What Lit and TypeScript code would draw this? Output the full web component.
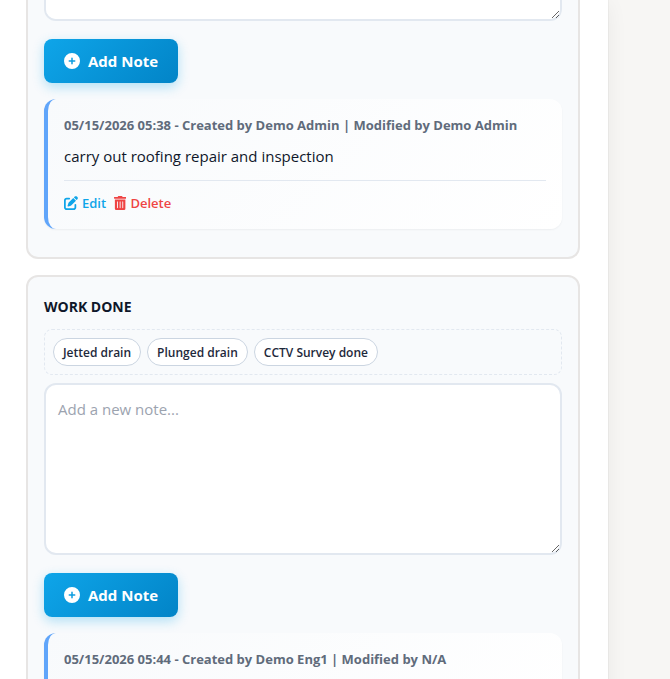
import { LitElement, html, svg, css, nothing } from "lit";
import { customElement, property } from "lit/decorators.js";

const icon = (viewBox: string, path: string) => html`
  <svg class="icon" viewBox=${viewBox} aria-hidden="true">${svg`<path d=${path} />`}</svg>
`;

const plusIcon = icon(
  "0 0 512 512",
  "M256 512A256 256 0 1 0 256 0a256 256 0 1 0 0 512zM232 344V280H168c-13.3 0-24-10.7-24-24s10.7-24 24-24h64V168c0-13.3 10.7-24 24-24s24 10.7 24 24v64h64c13.3 0 24 10.7 24 24s-10.7 24-24 24H280v64c0 13.3-10.7 24-24 24s-24-10.7-24-24z"
);
const editIcon = icon(
  "0 0 512 512",
  "M471.6 21.7c-21.9-21.9-57.3-21.9-79.2 0L362.3 51.7l97.9 97.9 30.1-30.1c21.9-21.9 21.9-57.3 0-79.2L471.6 21.7zm-299.2 220c-6.1 6.1-10.8 13.6-13.5 21.9l-29.6 88.8c-2.9 8.6-.6 18.1 5.8 24.6s15.9 8.7 24.6 5.8l88.8-29.6c8.2-2.7 15.7-7.4 21.9-13.5L437.7 172.3 339.7 74.3 172.4 241.7zM96 64C43 64 0 107 0 160V416c0 53 43 96 96 96H352c53 0 96-43 96-96V320c0-17.7-14.3-32-32-32s-32 14.3-32 32v96c0 17.7-14.3 32-32 32H96c-17.7 0-32-14.3-32-32V160c0-17.7 14.3-32 32-32h96c17.7 0 32-14.3 32-32s-14.3-32-32-32H96z"
);
const trashIcon = icon(
  "0 0 448 512",
  "M32 464a48 48 0 0 0 48 48h288a48 48 0 0 0 48-48V128H32zm272-256a16 16 0 0 1 32 0v224a16 16 0 0 1-32 0zm-96 0a16 16 0 0 1 32 0v224a16 16 0 0 1-32 0zm-96 0a16 16 0 0 1 32 0v224a16 16 0 0 1-32 0zM432 32H312l-9.4-18.7A24 24 0 0 0 281.1 0H166.8a23.72 23.72 0 0 0-21.4 13.3L136 32H16A16 16 0 0 0 0 48v32a16 16 0 0 0 16 16h416a16 16 0 0 0 16-16V48a16 16 0 0 0-16-16z"
);

interface Note {
  meta: string;
  text: string;
}

@customElement("note-section")
class NoteSection extends LitElement {
  @property() heading = "";
  @property({ attribute: false }) presets: string[] = [];
  @property({ attribute: false }) notes: Note[] = [];
  @property({ type: Boolean, reflect: true }) continued = false;

  static styles = css`
    :host {
      display: block;
      box-sizing: border-box;
      padding: 16px;
      background: #f8fafc;
      border: 2px solid #e7e5e4;
      border-radius: 12px;
    }
    :host([continued]) {
      padding-top: 0;
      border-top: 0;
      border-radius: 0 0 12px 12px;
    }
    * {
      box-sizing: border-box;
      font-family: "Open Sans", "Noto Sans", sans-serif;
    }
    .heading {
      margin: 4px 0 12px;
      font-size: 14px;
      line-height: 20px;
      font-weight: 700;
      color: #0f172a;
      text-transform: uppercase;
    }
    .presets {
      display: flex;
      flex-wrap: wrap;
      gap: 6px;
      padding: 8px;
      margin-bottom: 8px;
      border: 1px dashed #e2e8f0;
      border-radius: 8px;
    }
    .chip {
      height: 28px;
      padding: 0 9px;
      font-size: 12px;
      font-weight: 600;
      color: #1e293b;
      background: #fff;
      border: 1px solid #cbd5e1;
      border-radius: 14px;
    }
    .entry {
      display: block;
      width: 100%;
      height: 172px;
      margin: 0 0 18px;
      padding: 12px;
      font-size: 15px;
      line-height: 24px;
      color: #1e293b;
      background: #fff;
      border: 2px solid #e2e8f0;
      border-radius: 12px;
      resize: vertical;
    }
    .entry::placeholder {
      color: #9ca3af;
    }
    :host([continued]) .entry {
      height: 21px;
      padding: 0 12px;
      border-top: 0;
      border-radius: 0 0 12px 12px;
    }
    .icon {
      flex: none;
      height: 14px;
      fill: currentColor;
    }
    .add {
      display: flex;
      align-items: center;
      gap: 8px;
      height: 44px;
      margin-bottom: 16px;
      padding: 0 20px;
      font-size: 15px;
      font-weight: 700;
      color: #fff;
      background: linear-gradient(135deg, #0ea5e9, #0284c7);
      border: 0;
      border-radius: 8px;
      box-shadow: 0 4px 12px rgba(14, 165, 233, 0.3);
    }
    .add .icon {
      height: 16px;
    }
    .note {
      margin-bottom: 12px;
      padding: 16px;
      background: linear-gradient(135deg, #f8fafc, #ffffff);
      border-left: 4px solid #60a5fa;
      border-radius: 12px;
      box-shadow: 0 1px 2px rgba(0, 0, 0, 0.05);
    }
    .meta {
      margin-bottom: 9px;
      font-size: 13px;
      line-height: 20px;
      font-weight: 700;
      color: #606b7b;
    }
    .text {
      min-height: 24px;
      margin: 0;
      font-size: 15px;
      line-height: 24px;
      color: #0f172a;
    }
    .actions {
      display: flex;
      gap: 8px;
      margin-top: 12px;
      padding-top: 12px;
      border-top: 1px solid #e2e8f0;
    }
    .action {
      display: flex;
      align-items: center;
      gap: 4px;
      height: 20px;
      padding: 0;
      font-size: 13px;
      font-weight: 600;
      background: none;
      border: 0;
    }
    .edit {
      color: #0ea5e9;
    }
    .delete {
      color: #ef4444;
    }
  `;

  render() {
    return html`
      ${this.heading ? html`<h3 class="heading">${this.heading}</h3>` : nothing}
      ${this.presets.length
        ? html`<div class="presets">
            ${this.presets.map((p) => html`<button type="button" class="chip">${p}</button>`)}
          </div>`
        : nothing}
      <textarea
        class="entry"
        aria-label="New note"
        placeholder=${this.continued ? "" : "Add a new note..."}
      ></textarea>
      <button type="button" class="add">${plusIcon}<span>Add Note</span></button>
      ${this.notes.map(
        (n) => html`<article class="note">
          <div class="meta">${n.meta}</div>
          <p class="text">${n.text}</p>
          ${n.text
            ? html`<div class="actions">
                <button type="button" class="action edit">${editIcon}<span>Edit</span></button>
                <button type="button" class="action delete">${trashIcon}<span>Delete</span></button>
              </div>`
            : nothing}
        </article>`
      )}
    `;
  }
}

@customElement("app-root")
class AppRoot extends LitElement {
  static styles = css`
    :host {
      display: block;
      height: 100vh;
      overflow: hidden;
      background: #f7f6f4;
    }
    .panel {
      display: flex;
      flex-direction: column;
      gap: 16px;
      box-sizing: border-box;
      min-height: 100vh;
      margin-right: 62px;
      padding: 0 28px 0 26px;
      background: #fff;
      box-shadow: 0 0 0 1px rgba(0, 0, 0, 0.03), 0 4px 20px rgba(0, 0, 0, 0.06);
    }
  `;

  render() {
    return html`
      <main class="panel">
        <note-section
          continued
          .notes=${[
            {
              meta: "05/15/2026 05:38 - Created by Demo Admin | Modified by Demo Admin",
              text: "carry out roofing repair and inspection",
            },
          ]}
        ></note-section>
        <note-section
          heading="Work Done"
          .presets=${["Jetted drain", "Plunged drain", "CCTV Survey done"]}
          .notes=${[
            { meta: "05/15/2026 05:44 - Created by Demo Eng1 | Modified by N/A", text: "" },
          ]}
        ></note-section>
      </main>
    `;
  }
}
